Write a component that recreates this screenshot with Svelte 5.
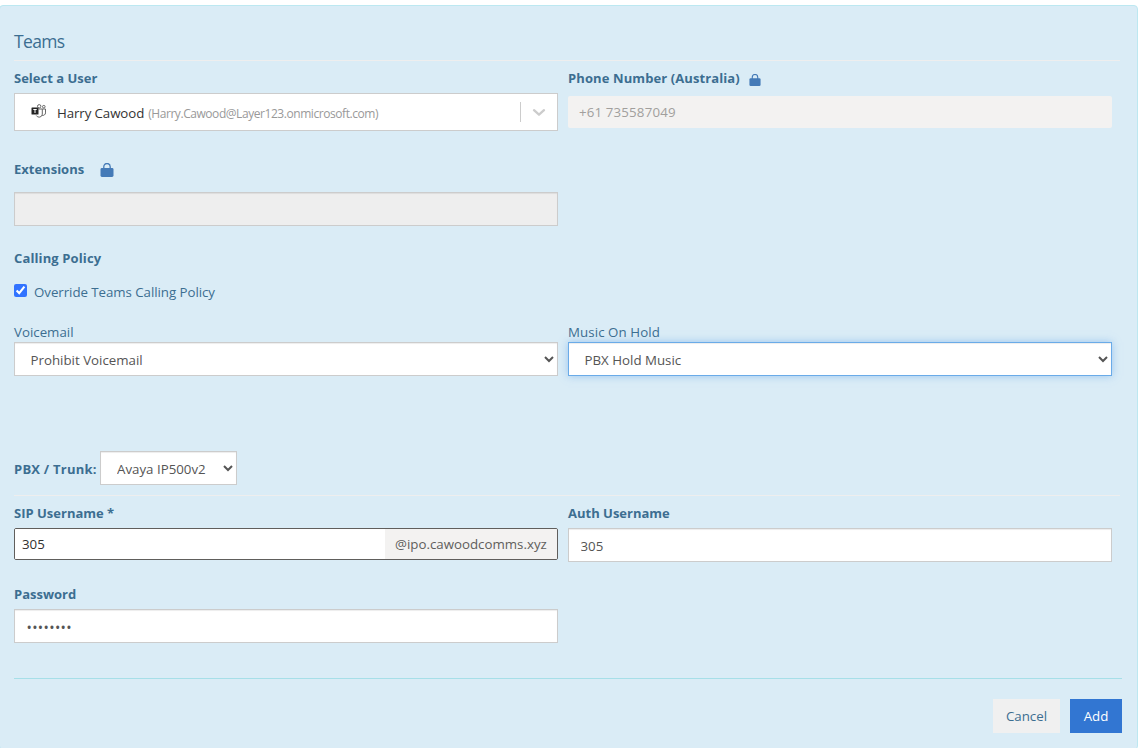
<script lang="ts">
	let overridePolicy = $state(true);
	let voicemail = $state('Prohibit Voicemail');
	let holdMusic = $state('PBX Hold Music');
	let trunk = $state('Avaya IP500v2');
	let sipUsername = $state('305');
	let authUsername = $state('305');
	let password = $state('password');
</script>

{#snippet lock(size: number)}
	<svg class="lock" width={size} height={size} viewBox="0 0 14 14">
		<path d="M3.8 6.5V3.7a3.2 3.2 0 0 1 6.4 0v2.8" fill="none" stroke="#447ab7" stroke-width="1.3" />
		<rect x="0.5" y="5" width="13" height="9" rx="1.4" fill="#447ab7" />
	</svg>
{/snippet}

<div class="panel">
	<h2>Teams</h2>
	<hr />

	<div class="row user-row">
		<div class="col">
			<div class="label"><b>Select a User</b></div>
			<div class="user-select">
				<svg class="teams" width="16" height="14" viewBox="0 0 16 14">
					<g fill="none" stroke="#666" stroke-width="1">
						<circle cx="8.2" cy="2.3" r="1.7" />
						<circle cx="12.8" cy="2.7" r="1.3" />
						<path d="M7.5 5h3.8v5.2a3.2 3.2 0 0 1-6 1.3M11.3 5h3.2v3.9a2.6 2.6 0 0 1-3.4 2.4" />
					</g>
					<rect x="0.5" y="3.5" width="7" height="7" rx="0.6" fill="#252525" />
					<path d="M2.3 5.5h3.4M4 5.5v3.5" stroke="#fff" stroke-width="1" />
				</svg>
				<span class="name">Harry Cawood</span>
				<span class="email">(Harry.Cawood@Layer123.onmicrosoft.com)</span>
				<span class="divider"></span>
				<svg class="arrow" width="20" height="20" viewBox="0 0 20 20">
					<path d="M5 8.2 10 12.7l5-4.5" fill="none" stroke="#ccc" stroke-width="2.3" stroke-linecap="round" stroke-linejoin="round" />
				</svg>
			</div>
		</div>
		<div class="col">
			<div class="label phone-label"><b>Phone Number (Australia)</b>{@render lock(12)}</div>
			<input class="phone" value="+61 735587049" disabled />
		</div>
	</div>

	<div class="ext-row">
		<div class="label ext-label"><b>Extensions</b>{@render lock(14)}</div>
		<input class="control ext" disabled />
	</div>

	<div class="label policy"><b>Calling Policy</b></div>
	<label class="check">
		<input type="checkbox" bind:checked={overridePolicy} />
		<span>Override Teams Calling Policy</span>
	</label>

	<div class="row policy-row">
		<div class="col">
			<div class="label">Voicemail</div>
			<select class="control" bind:value={voicemail}>
				<option>Prohibit Voicemail</option>
			</select>
		</div>
		<div class="col">
			<div class="label hold">Music On Hold</div>
			<select class="control focused" bind:value={holdMusic}>
				<option>PBX Hold Music</option>
			</select>
		</div>
	</div>

	<div class="trunk-row">
		<b>PBX / Trunk:</b>
		<select class="control trunk" bind:value={trunk}>
			<option>Avaya IP500v2</option>
		</select>
	</div>
	<hr />

	<div class="row sip-row">
		<div class="col">
			<div class="label"><b>SIP Username *</b></div>
			<div class="sip">
				<input bind:value={sipUsername} />
				<span>@ipo.cawoodcomms.xyz</span>
			</div>
		</div>
		<div class="col">
			<div class="label"><b>Auth Username</b></div>
			<input class="control" bind:value={authUsername} />
		</div>
	</div>

	<div class="password-row">
		<div class="label"><b>Password</b></div>
		<input class="control password" type="password" bind:value={password} />
	</div>

	<div class="footer">
		<button class="cancel">Cancel</button>
		<button class="add">Add</button>
	</div>
</div>

<style>
	:global(body) {
		background: #fff;
		overflow: hidden;
	}

	.panel,
	.panel :global(*) {
		box-sizing: border-box;
	}

	.panel {
		width: 1139px;
		height: 745px;
		margin: 5px 0 0 -1px;
		padding: 25px 15px 0 14px;
		border: 1px solid #bce8f1;
		border-radius: 4px;
		background: #daecf6;
		color: #3c6e91;
		font-family: 'Segoe UI', 'Open Sans', sans-serif;
		font-size: 13.3px;
		line-height: 20px;
	}

	h2 {
		margin: 0 0 9px;
		font-size: 17.5px;
		font-weight: 400;
		letter-spacing: -0.65px;
	}

	hr {
		width: 1106px;
		height: 1px;
		margin: 0;
		border: 0;
		background: #eee;
	}

	b {
		font-weight: 700;
		font-size: 13px;
	}

	input,
	select,
	button {
		margin: 0;
		font-family: inherit;
		font-size: 13.3px;
	}

	.row {
		display: grid;
		grid-template-columns: 544px 544px;
		gap: 10px;
	}

	.label {
		display: flex;
		align-items: center;
		height: 20px;
		white-space: nowrap;
	}

	.hold {
		letter-spacing: 0.08px;
	}

	.user-row {
		padding-top: 7px;
	}

	.user-select {
		display: flex;
		align-items: center;
		height: 38px;
		margin-top: 5px;
		padding-left: 16px;
		border: 1px solid #ccc;
		background: #fff;
	}

	.teams {
		margin: 0 10px 2px 0;
	}

	.name {
		margin-right: 4px;
		padding-top: 2px;
		color: #333;
		letter-spacing: -0.1px;
	}

	.email {
		flex: 1;
		padding-top: 3px;
		color: #999;
		font-size: 12px;
		letter-spacing: -0.44px;
	}

	.divider {
		width: 1px;
		height: 20px;
		background: #ccc;
	}

	.arrow {
		margin: 0 8px;
	}

	.phone-label b {
		letter-spacing: 0.1px;
	}

	.phone-label .lock {
		margin: 4px 0 0 9px;
	}

	.ext-label .lock {
		margin: 1px 0 0 16px;
	}

	.phone {
		width: 544px;
		height: 32px;
		margin-top: 8px;
		padding: 0 11px;
		border: 0;
		border-radius: 2px;
		background: #f3f2f1;
		color: #a19f9d;
		letter-spacing: 0.15px;
	}

	.ext-row {
		margin-top: 28px;
	}

	.control {
		display: block;
		width: 544px;
		height: 34px;
		padding: 7px 12px 5px 11.5px;
		border: 1px solid #ccc;
		border-radius: 0;
		background: #fff;
		box-shadow: inset 0 1px 1px rgba(0, 0, 0, 0.075);
		color: #555;
		outline: none;
	}

	.focused {
		border-color: #6aabe8;
		box-shadow: inset 0 1px 1px rgba(0, 0, 0, 0.075), 0 0 8px rgba(102, 165, 233, 0.55);
	}

	.ext {
		margin-top: 13px;
		background: #eee;
	}

	.policy {
		margin-top: 22px;
	}

	.policy b {
		letter-spacing: 0.12px;
	}

	.check {
		display: flex;
		width: 300px;
		height: 20px;
		margin-top: 14px;
		letter-spacing: -0.05px;
	}

	.check input {
		width: 13px;
		height: 13px;
		margin: 2px 7px 0 0;
		accent-color: #3173ff;
	}

	.policy-row {
		margin-top: 20px;
	}

	.trunk-row {
		display: flex;
		align-items: center;
		height: 34px;
		margin: 75px 0 10px;
	}

	.trunk-row b {
		width: 86px;
		padding-top: 1px;
		letter-spacing: 0.22px;
		white-space: nowrap;
	}

	.trunk {
		width: 137px;
		padding-left: 12px;
	}

	.sip-row {
		padding-top: 7px;
	}

	.sip-row .control,
	.sip {
		margin-top: 5px;
	}

	.sip {
		display: flex;
		height: 32px;
		border: 1px solid #605e5c;
		border-radius: 2px;
		background: #fff;
		overflow: hidden;
	}

	.sip input {
		width: 370px;
		padding: 0 7px;
		border: 0;
		outline: none;
		color: #323130;
	}

	.sip span {
		flex: 1;
		padding: 0 10px;
		background: #f3f2f1;
		color: #605e5c;
		line-height: 30px;
		white-space: nowrap;
	}

	.password-row {
		margin-top: 22px;
	}

	.password {
		margin-top: 5px;
		font-size: 14.2px;
		letter-spacing: 0.35px;
	}

	.footer {
		display: flex;
		justify-content: flex-end;
		gap: 10px;
		margin-top: 35px;
		padding-top: 20px;
		border-top: 1px solid #a6dfe8;
	}

	button {
		height: 34px;
		padding: 0;
		border: 0;
		line-height: 34px;
	}

	.cancel {
		width: 67px;
		background: #f0f0f0;
		color: #3c6e91;
	}

	.add {
		width: 52px;
		background: #3276d2;
		color: #fff;
	}
</style>
